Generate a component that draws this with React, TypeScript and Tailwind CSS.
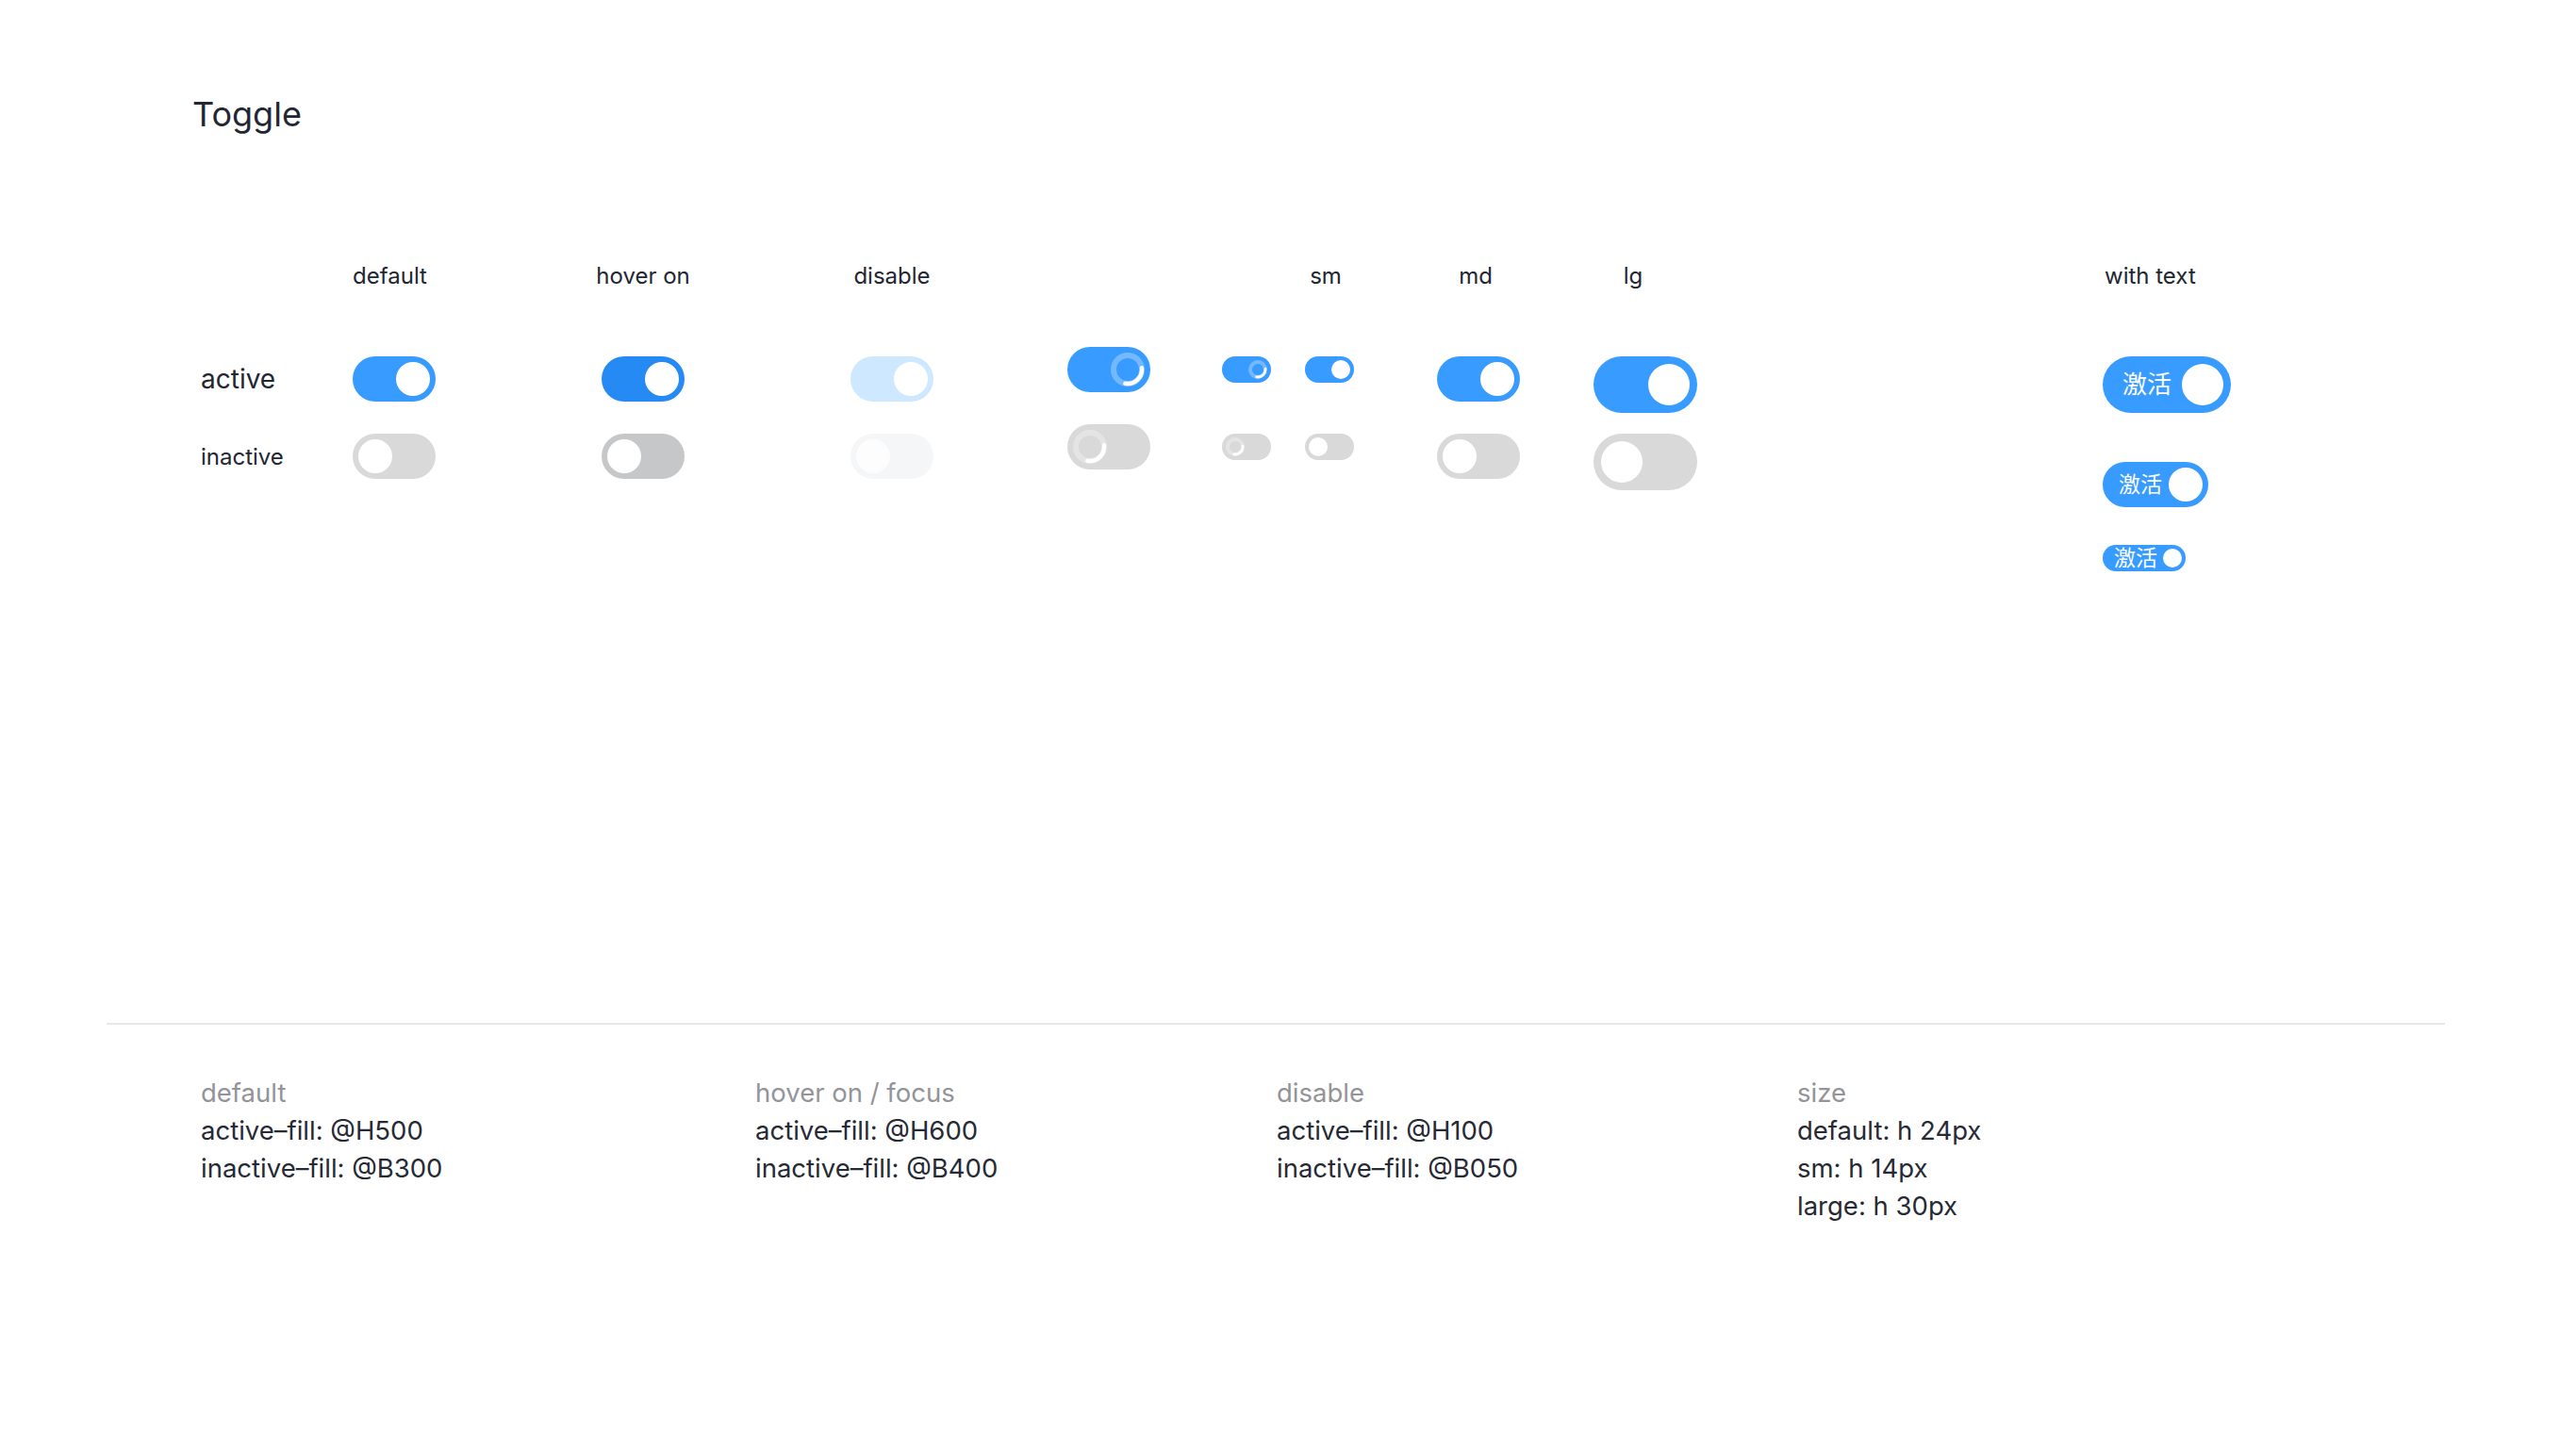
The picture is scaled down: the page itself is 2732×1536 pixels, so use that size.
import React from "react";

type Size = "sm" | "md" | "lg";

const trackSize: Record<Size, string> = {
  sm: "w-[52px] h-[28px] p-[4px]",
  md: "w-[88px] h-[48px] p-[6px]",
  lg: "w-[110px] h-[60px] p-[8px]",
};

const knobSize: Record<Size, string> = {
  sm: "size-[20px]",
  md: "size-[36px]",
  lg: "size-[44px]",
};

// ring + arc drawn where the knob would sit
const Spinner = ({ size }: { size: "sm" | "md" }) =>
  size === "md" ? (
    <svg width="36" height="36" viewBox="0 0 36 36" className="shrink-0">
      <circle cx="18" cy="18" r="15" fill="none" stroke="white" strokeOpacity="0.3" strokeWidth="6" />
      <path d="M32.89 16.17 A15 15 0 0 1 15.4 32.77" fill="none" stroke="white" strokeWidth="4.5" strokeLinecap="round" />
    </svg>
  ) : (
    <svg width="20" height="20" viewBox="0 0 20 20" className="shrink-0">
      <circle cx="10" cy="10" r="8" fill="none" stroke="white" strokeOpacity="0.3" strokeWidth="4" />
      <path d="M17.94 9.03 A8 8 0 0 1 8.61 17.88" fill="none" stroke="white" strokeWidth="2.8" strokeLinecap="round" />
    </svg>
  );

const Toggle = ({
  size = "md",
  on,
  track,
  knob = "bg-white",
  loading,
}: {
  size?: Size;
  on: boolean;
  track: string;
  knob?: string;
  loading?: boolean;
}) => (
  <div
    className={`flex shrink-0 items-center rounded-full ${trackSize[size]} ${track} ${
      on ? "justify-end" : "justify-start"
    }`}
  >
    {loading ? (
      <Spinner size={size === "sm" ? "sm" : "md"} />
    ) : (
      <div className={`rounded-full ${knobSize[size]} ${knob}`} />
    )}
  </div>
);

const Header = ({ children, className = "" }: { children: React.ReactNode; className?: string }) => (
  <div className={`h-[24px] whitespace-nowrap text-[24px] leading-none text-[#222631] ${className}`}>
    {children}
  </div>
);

const Column = ({
  label,
  labelClass,
  className = "",
  offset = "mt-[73px]",
  children,
}: {
  label?: string;
  labelClass?: string;
  className?: string;
  offset?: string;
  children: React.ReactNode;
}) => (
  <div className={`flex flex-col items-center ${className}`}>
    <Header className={labelClass}>{label ?? ""}</Header>
    <div className={`flex flex-col items-center gap-[34px] ${offset}`}>{children}</div>
  </div>
);

const blue = "bg-[#389bff]";
const grey = "bg-[#d9d9d9]";

const WithText = ({ size }: { size: Size }) => {
  if (size === "lg")
    return (
      <div className={`flex h-[60px] w-[136px] items-center justify-between rounded-full pl-[21px] pr-[8px] ${blue}`}>
        <span className="text-[26px] leading-none text-white">激活</span>
        <div className="size-[44px] rounded-full bg-white" />
      </div>
    );
  if (size === "md")
    return (
      <div className={`flex h-[48px] w-[112px] items-center justify-between rounded-full pl-[17px] pr-[6px] ${blue}`}>
        <span className="text-[23px] leading-none text-white">激活</span>
        <div className="size-[36px] rounded-full bg-white" />
      </div>
    );
  return (
    <div className={`flex h-[28px] w-[88px] items-center justify-between rounded-full pl-[12px] pr-[4px] ${blue}`}>
      <span className="text-[23px] leading-none text-white">激活</span>
      <div className="size-[20px] rounded-full bg-white" />
    </div>
  );
};

const notes = [
  { title: "default", lines: ["active–fill: @H500", "inactive–fill: @B300"], w: "w-[588px]" },
  { title: "hover on / focus", lines: ["active–fill: @H600", "inactive–fill: @B400"], w: "w-[553px]" },
  { title: "disable", lines: ["active–fill: @H100", "inactive–fill: @B050"], w: "w-[552px]" },
  { title: "size", lines: ["default: h 24px", "sm: h 14px", "large: h 30px"], w: "w-[500px]" },
];

export default function App() {
  return (
    <div className="min-h-screen w-full bg-white font-['Inter','Noto_Sans_CJK_SC',sans-serif] text-[#262a35]">
      <h1 className="pl-[204px] pt-[103px] text-[36px] font-normal leading-none text-[#232733]">Toggle</h1>

      <section className="mt-[142px] flex h-[804px] items-start pl-[213px]">
        {/* row labels */}
        <div className="flex w-[161px] flex-col items-start">
          <Header> </Header>
          <div className="mt-[73px] flex h-[48px] items-center text-[28px] leading-none text-[#222631]">active</div>
          <div className="mt-[34px] flex h-[48px] items-center pt-[2px] text-[24px] leading-none text-[#222631]">
            inactive
          </div>
        </div>

        <Column label="default" labelClass="mr-[9px]" className="w-[88px]">
          <Toggle on track={blue} />
          <Toggle on={false} track={grey} />
        </Column>

        <Column label="hover on" className="ml-[176px] w-[88px]">
          <Toggle on track="bg-[#268af5]" />
          <Toggle on={false} track="bg-[#c6c7c9]" />
        </Column>

        <Column label="disable" className="ml-[176px] w-[88px]">
          <Toggle on track="bg-[#cde8ff]" />
          <Toggle on={false} track="bg-[#f5f6f8]" knob="bg-[#fdfdfd]" />
        </Column>

        <Column className="ml-[142px] w-[88px]" offset="mt-[63px]">
          <Toggle on track={blue} loading />
          <Toggle on={false} track={grey} loading />
        </Column>

        <Column className="ml-[76px] w-[52px]">
          <div className="flex h-[48px] flex-col">
            <Toggle size="sm" on track={blue} loading />
          </div>
          <Toggle size="sm" on={false} track={grey} loading />
        </Column>

        <Column label="sm" labelClass="mr-[8px]" className="ml-[36px] w-[52px]">
          <div className="flex h-[48px] flex-col">
            <Toggle size="sm" on track={blue} />
          </div>
          <Toggle size="sm" on={false} track={grey} />
        </Column>

        <Column label="md" labelClass="mr-[6px]" className="ml-[88px] w-[88px]">
          <Toggle on track={blue} />
          <Toggle on={false} track={grey} />
        </Column>

        <Column label="lg" labelClass="mr-[26px]" className="ml-[78px] w-[110px]">
          <div className="flex h-[48px] flex-col">
            <Toggle size="lg" on track={blue} />
          </div>
          <Toggle size="lg" on={false} track={grey} />
        </Column>

        <div className="ml-[430px] flex flex-col items-start">
          <Header className="pl-[2px]">with text</Header>
          <div className="mt-[73px] flex flex-col items-start">
            <WithText size="lg" />
            <div className="mt-[52px]">
              <WithText size="md" />
            </div>
            <div className="mt-[40px]">
              <WithText size="sm" />
            </div>
          </div>
        </div>
      </section>

      <div className="ml-[113px] h-[2px] w-[2480px] bg-[#e8e8ec]" />

      <section className="mt-[52px] flex pl-[213px] text-[27.5px] leading-[40px]">
        {notes.map((n) => (
          <div key={n.title} className={`flex flex-col ${n.w}`}>
            <div className="text-[#939399]">{n.title}</div>
            {n.lines.map((l) => (
              <div key={l} className="text-[#262a35]">
                {l}
              </div>
            ))}
          </div>
        ))}
      </section>
    </div>
  );
}
